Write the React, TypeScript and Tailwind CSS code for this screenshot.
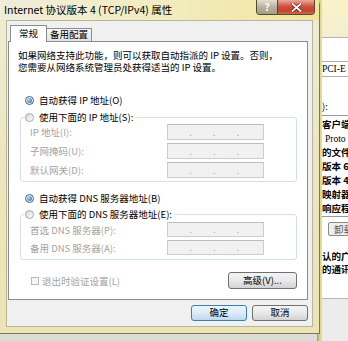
import React from "react";

function Radio({ checked, label }: { checked?: boolean; label: string }) {
  return (
    <div className="flex items-center h-[12px] gap-[5px] bg-white pr-[2px]">
      <span
        className={`flex items-center justify-center w-[9px] h-[9px] rounded-full border ${
          checked
            ? "border-[#4d5d70] bg-[#eef2f7]"
            : "border-[#a3abb5] bg-linear-to-br from-[#d6d6d6] to-[#ffffff]"
        }`}
      >
        {checked && (
          <span className="w-[5px] h-[5px] rounded-full bg-[radial-gradient(circle_at_35%_35%,#a8d8ff,#1c5fae)]" />
        )}
      </span>
      <span className="text-[9.5px] leading-[12px] text-black whitespace-nowrap">{label}</span>
    </div>
  );
}

function IpBox({ tall }: { tall?: boolean }) {
  return (
    <div
      className={`flex items-center w-[97px] ${tall ? "h-[16px]" : "h-[15px]"} border border-[#cdcdcd] border-t-[#bdbdbd] bg-[#f1f1f1]`}
    >
      {[0, 1, 2, 3].map((i) => (
        <div key={i} className="flex-1 flex justify-end items-center text-[#a9a9a9] text-[9px] leading-none">
          {i < 3 ? "." : ""}
        </div>
      ))}
    </div>
  );
}

function Field({ label, tall }: { label: string; tall?: boolean }) {
  return (
    <div className="flex items-center">
      <span className="w-[137px] text-[9.5px] leading-[12px] text-[#a3a3a3] whitespace-nowrap">{label}</span>
      <IpBox tall={tall} />
    </div>
  );
}

function WinButton({ label, wide, primary }: { label: string; wide?: boolean; primary?: boolean }) {
  return (
    <button
      className={`flex items-center justify-center rounded-[3px] border text-[9.5px] leading-none text-black ${
        wide ? "w-[69px] h-[17px]" : "w-[56px] h-[16px]"
      } ${
        primary
          ? "border-[#3c7fb1] bg-linear-to-b from-[#eaf5fc] via-[#dcecf8] to-[#bcd8ee]"
          : "border-[#707070] bg-linear-to-b from-[#f4f4f4] via-[#e9e9e9] to-[#d2d2d2]"
      }`}
    >
      {label}
    </button>
  );
}

function BackWindow() {
  const items = ["客户端", "Proto", "的文件", "版本 6", "版本 4", "映射器", "响应程"];
  return (
    <div className="absolute left-[317px] top-0 w-[31px] h-[341px] flex">
      <div className="w-[5px] h-full bg-linear-to-r from-[#a29c62] via-[#d8cf8c] to-[#e6dfa6]" />
      <div className="flex-1 flex flex-col bg-white text-[9.5px] leading-[14px] text-black overflow-hidden whitespace-nowrap">
        <div className="h-[38px] bg-linear-to-b from-[#f8f3c8] to-[#f3efcf] border-b border-[#b5b5b0]" />
        <div className="mt-[23px] h-[16px] border-y border-[#b0b0b0] font-['Liberation_Serif',serif] leading-[14px]">
          PCI-E
        </div>
        <div className="mt-[22px]">):</div>
        <div className="mt-[2px] border-y border-[#9a9a9a] py-[1px] font-bold">
          {items.map((t) => (
            <div key={t} className="h-[14px] leading-[14px]">
              {t === "Proto" ? <span className="font-['Liberation_Serif',serif] font-normal pl-[3px]">{t}</span> : t}
            </div>
          ))}
        </div>
        <div className="mt-[5px] ml-[6px] h-[14px] w-[40px] rounded-[2px] border border-[#8a8a8a] bg-[#efefef] pl-[5px] leading-[12px] text-[#555]">
          卸载
        </div>
        <div className="mt-[14px] font-bold leading-[12px]">认的广</div>
        <div className="font-bold leading-[12px] mt-[1px]">的通讯</div>
        <div className="mt-auto h-[43px] border-t border-[#b5b5b5] bg-[#ececec]" />
      </div>
    </div>
  );
}

function CaptionButtons() {
  return (
    <div className="ml-auto flex h-[15px] rounded-b-[4px] border border-t-0 border-[#4f4b38] bg-[#b0ab95]">
      <div className="w-[21px] h-full flex items-center justify-center rounded-bl-[3px] border-r border-[#4f4b38] bg-[linear-gradient(180deg,#e2dfcd,#b4af9a_55%,#a49f88)] text-white text-[10px] font-bold leading-none">
        ?
      </div>
      <div className="w-[36px] h-full flex items-center justify-center rounded-br-[3px] bg-[linear-gradient(180deg,#eaa896,#cc4b3a_50%,#c0452f_80%,#d0703e)]">
        <svg width="11" height="9" viewBox="0 0 11 9">
          <path d="M1.5 1 L9.5 8 M9.5 1 L1.5 8" stroke="#6a1e14" strokeWidth="3.2" strokeLinecap="square" />
          <path d="M1.5 1 L9.5 8 M9.5 1 L1.5 8" stroke="#ffffff" strokeWidth="1.8" strokeLinecap="square" />
        </svg>
      </div>
    </div>
  );
}

function Dialog() {
  return (
    <div className="absolute left-0 top-0 w-[320px] h-[334px] flex flex-col bg-linear-to-b from-[#efecd3] via-[#ece6be] to-[#ebe4b6] border-r border-b border-[#7d7852] rounded-tr-[5px]">
      {/* title bar */}
      <div className="h-[20px] shrink-0 flex items-start pl-[4px] pr-[4px] bg-linear-to-r from-[#efeddb] via-[#f2ecc0] to-[#f1e59c]">
        <span className="self-center text-[10.5px] leading-none text-black whitespace-nowrap">
          Internet 协议版本 4 (TCP/IPv4) 属性
        </span>
        <CaptionButtons />
      </div>

      {/* client area */}
      <div className="mx-[6px] h-[307px] flex flex-col bg-[#f0f0f0] border border-[#b9b59a]">
        {/* tabs */}
        <div className="flex items-end pl-[3px] pt-[4px]">
          <div className="relative z-10 -mb-px w-[37px] h-[17px] flex items-center justify-center bg-white border border-b-0 border-[#898c95] text-[9.5px] leading-none">
            常规
          </div>
          <div className="-ml-px w-[46px] h-[13px] flex items-center justify-center border border-b-0 border-[#898c95] bg-linear-to-b from-[#f7f7f7] to-[#e3e3e3] text-[9.5px] leading-none">
            备用配置
          </div>
        </div>

        {/* tab panel */}
        <div className="ml-[1px] w-[300px] h-[259px] flex flex-col bg-white border border-[#898c95] pl-[11px] pr-[10px] pt-[7px]">
          <div className="-ml-[2px] text-[9.5px] leading-[12px] text-black whitespace-nowrap">
            <div>如果网络支持此功能，则可以获取自动指派的 IP 设置。否则，</div>
            <div>您需要从网络系统管理员处获得适当的 IP 设置。</div>
          </div>

          <div className="mt-[21px] ml-[5px]">
            <Radio checked label="自动获得 IP 地址(O)" />
          </div>

          <fieldset className="mt-[5px] border border-[#d5dfe5] rounded-[3px]">
            <legend className="ml-[4px]">
              <Radio label="使用下面的 IP 地址(S):" />
            </legend>
            <div className="flex flex-col gap-[3px] pl-[9px] pt-[1px] pb-[3px]">
              <Field label="IP 地址(I):" tall />
              <Field label="子网掩码(U):" tall />
              <Field label="默认网关(D):" tall />
            </div>
          </fieldset>

          <div className="mt-[10px] ml-[5px]">
            <Radio checked label="自动获得 DNS 服务器地址(B)" />
          </div>

          <fieldset className="mt-[4px] border border-[#d5dfe5] rounded-[3px]">
            <legend className="ml-[4px]">
              <Radio label="使用下面的 DNS 服务器地址(E):" />
            </legend>
            <div className="flex flex-col gap-[3px] pl-[9px] pt-[2px] pb-[4px]">
              <Field label="首选 DNS 服务器(P):" />
              <Field label="备用 DNS 服务器(A):" />
            </div>
          </fieldset>

          <div className="mt-[12px] flex items-center justify-between">
            <div className="flex items-center gap-[3px] pl-[11px]">
              <span className="w-[8px] h-[8px] border border-[#b9b9b9] bg-[#f7f7f7]" />
              <span className="text-[9.5px] leading-[12px] text-[#a3a3a3]">退出时验证设置(L)</span>
            </div>
            <WinButton label="高级(V)..." wide />
          </div>
        </div>

        {/* dialog buttons */}
        <div className="mt-[5px] flex justify-end gap-[5px] pr-[4px]">
          <WinButton label="确定" primary />
          <WinButton label="取消" />
        </div>
      </div>
    </div>
  );
}

export default function App() {
  return (
    <div className="relative w-[348px] h-[341px] overflow-hidden bg-linear-to-b from-[#c9c8c0] to-[#dcdcd6] font-['Noto_Sans_CJK_SC',sans-serif]">
      <BackWindow />
      <Dialog />
    </div>
  );
}
